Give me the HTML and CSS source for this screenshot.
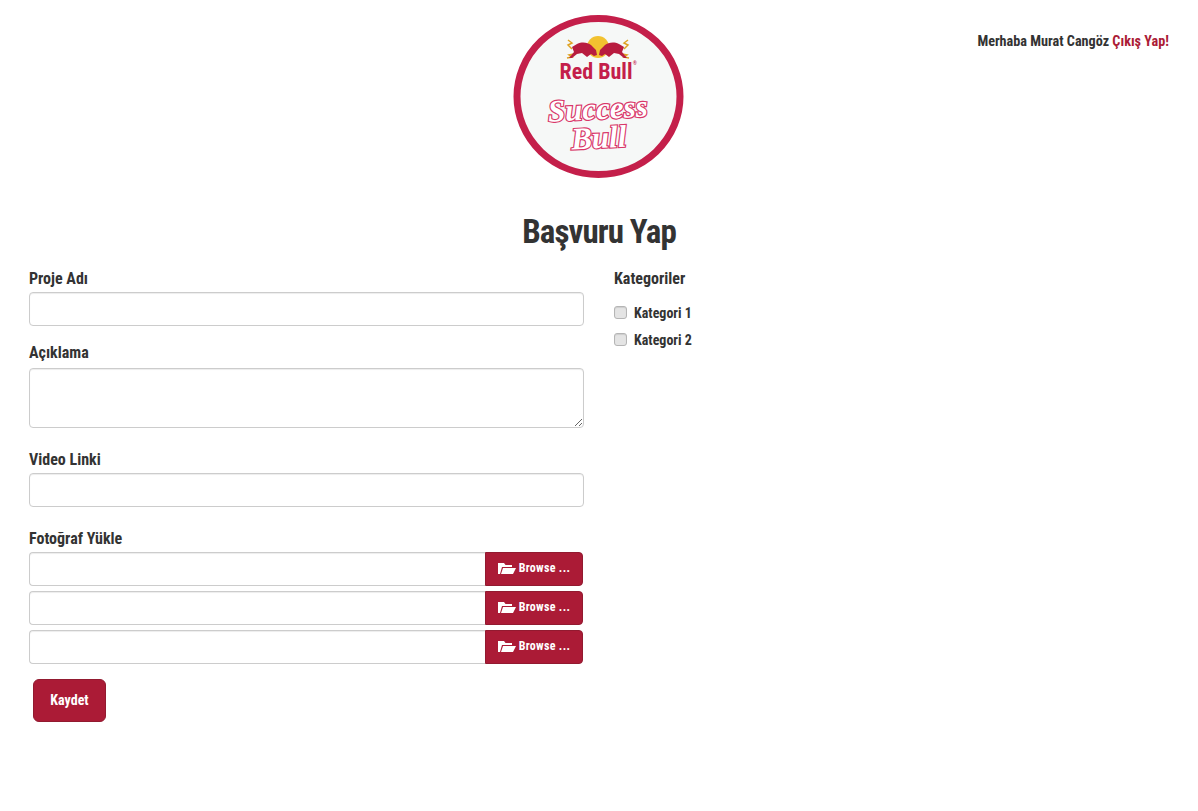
FILE: index.html
```html
<!DOCTYPE html>
<html lang="tr">
<head>
<meta charset="utf-8">
<title>Başvuru Yap</title>
<link rel="stylesheet" href="styles.css">
</head>
<body>
<div class="page">
  <header class="top">
    <div></div>
    <svg class="logo" viewBox="0 0 172 166" width="172" height="166" aria-label="Red Bull Success Bull">
      <ellipse cx="85.500" cy="82.500" rx="81.500" ry="78" fill="#f6f8f7" stroke="#c41f4a" stroke-width="7"/>
      <circle cx="85" cy="33" r="11" fill="#f2c230"/>
      <g>
        <path class="tail" d="M59 35 L55 31 L59 29 L55 26 M61 40 L56 41 L59 43 L54 44"/>
        <path class="bull" d="M56 44 L61 38 L59 33 L64 30 C70 27 75 29 78 31 L83 36 L84 41 L81 42 L78 40 L74 43 L69 39 L64 40 L59 44 Z"/>
      </g>
      <g transform="translate(170 0) scale(-1 1)">
        <path class="tail" d="M59 35 L55 31 L59 29 L55 26 M61 40 L56 41 L59 43 L54 44"/>
        <path class="bull" d="M56 44 L61 38 L59 33 L64 30 C70 27 75 29 78 31 L83 36 L84 41 L81 42 L78 40 L74 43 L69 39 L64 40 L59 44 Z"/>
      </g>
      <text class="rb" x="83" y="65" text-anchor="middle">Red Bull</text>
      <text class="rb-r" x="120" y="51">®</text>
      <g transform="rotate(-3 86 100)">
        <text class="script" x="85" y="105" text-anchor="middle">Success</text>
      </g>
      <g transform="rotate(-3 86 130)">
        <text class="script" x="86" y="134" text-anchor="middle">Bull</text>
      </g>
    </svg>
    <p class="greeting">Merhaba Murat Cangöz <a class="logout" href="#">Çıkış Yap!</a></p>
  </header>

  <h1 class="title">Başvuru Yap</h1>

  <form class="columns">
    <div class="col-main">
      <label class="label label-first" for="name">Proje Adı</label>
      <input class="field" id="name" type="text">

      <label class="label label-desc" for="desc">Açıklama</label>
      <textarea class="field area" id="desc"></textarea>

      <label class="label label-video" for="video">Video Linki</label>
      <input class="field" id="video" type="text">

      <label class="label label-photo">Fotoğraf Yükle</label>
      <div class="files">
        <div class="file">
          <input class="field file-input" type="text">
          <button class="browse" type="button"><svg class="folder" viewBox="0 0 18 13" width="18" height="13"><path d="M2 12 L0 12 L0 1 L6 1 L7.500 3 L14 3 L14 5 L4 5z M3 12 L5 6 L18 6 L15 12z"/></svg>Browse ...</button>
        </div>
        <div class="file">
          <input class="field file-input" type="text">
          <button class="browse" type="button"><svg class="folder" viewBox="0 0 18 13" width="18" height="13"><path d="M2 12 L0 12 L0 1 L6 1 L7.500 3 L14 3 L14 5 L4 5z M3 12 L5 6 L18 6 L15 12z"/></svg>Browse ...</button>
        </div>
        <div class="file">
          <input class="field file-input" type="text">
          <button class="browse" type="button"><svg class="folder" viewBox="0 0 18 13" width="18" height="13"><path d="M2 12 L0 12 L0 1 L6 1 L7.500 3 L14 3 L14 5 L4 5z M3 12 L5 6 L18 6 L15 12z"/></svg>Browse ...</button>
        </div>
      </div>
      <button class="save" type="button">Kaydet</button>
    </div>

    <div class="col-side">
      <div class="label label-first label-side">Kategoriler</div>
      <label class="check"><input class="box" type="checkbox"><span>Kategori 1</span></label>
      <label class="check"><input class="box" type="checkbox"><span>Kategori 2</span></label>
    </div>
  </form>
</div>
</body>
</html>
```
FILE: styles.css
```css
* { box-sizing: border-box; }
html, body { margin: 0; padding: 0; background: #fff; }
body {
  font-family: "Roboto Condensed", "Roboto", sans-serif;
  font-stretch: 75%;
  font-weight: 700;
  color: #333;
  font-size: 16px;
}
.page { width: 1170px; margin: 0 auto; height: 811px; overflow: hidden; }

.top {
  display: grid;
  grid-template-columns: 1fr 172px 1fr;
  padding-top: 14px;
  height: 180px;
  align-items: start;
}
.logo { display: block; }
.greeting {
  margin: 18px 15px 0 0;
  text-align: right;
  font-size: 14.200px;
  line-height: 18px;
  color: #333;
}
.logout { color: #ab1b36; text-decoration: none; }

.bull { fill: #b81c3f; }
.tail { fill: none; stroke: #dfa324; stroke-width: 1.500; }
.rb { font-family: "Roboto Condensed", "Roboto", sans-serif; font-stretch: 75%; font-weight: 700; font-size: 22px; fill: #c41f4a; }
.rb-r { font-family: "Liberation Sans", sans-serif; font-size: 5px; fill: #c41f4a; }
.script {
  font-family: "Liberation Serif", serif;
  font-style: italic;
  font-weight: 700;
  font-size: 31px;
  fill: #fff;
  stroke: #d9386a;
  stroke-width: 2.400;
  paint-order: stroke;
}

.title {
  margin: 29px 0 0;
  height: 59px;
  text-align: center;
  font-size: 33px;
  letter-spacing: -0.9px;
  line-height: 45px;
  font-weight: 700;
  color: #333;
}

.columns { display: flex; }
.col-main { width: 585px; padding: 0 15px; }
.col-side { width: 585px; padding: 0 15px; }

.label {
  display: block;
  font-size: 16px;
  line-height: 22px;
  height: 20px;
  color: #333;
}
.label-first { height: 24px; }
.label-side { height: 31px; }
.label-desc { margin-top: 16px; margin-bottom: 6px; }
.label-video { margin-top: 21px; margin-bottom: 4px; }
.label-photo { margin-top: 21px; margin-bottom: 4px; }

.field {
  display: block;
  width: 100%;
  height: 34px;
  border: 1px solid #ccc;
  border-radius: 4px;
  background: #fff;
  font: inherit;
  box-shadow: inset 0 1px 1px rgba(0,0,0,.075);
}
.area { height: 60px; resize: vertical; }

.files { display: flex; flex-direction: column; gap: 5px; }
.file { display: flex; width: 554px; }
.file-input { flex: 1; min-width: 0; border-radius: 4px 0 0 4px; border-right: 0; }
.browse {
  width: 98px;
  height: 34px;
  display: flex;
  align-items: center;
  justify-content: center;
  gap: 3px;
  border: 1px solid #921a30;
  border-radius: 0 4px 4px 0;
  background: #ab1b36;
  color: #fff;
  font: inherit;
  font-size: 12px;
  letter-spacing: 0.3px;
  padding: 0 0 2px;
}
.folder { fill: #fff; flex: none; }

.save {
  display: block;
  margin: 15px 0 0 4px;
  width: 73px;
  height: 43px;
  border: 1px solid #921a30;
  border-radius: 6px;
  background: #ab1b36;
  color: #fff;
  font: inherit;
  font-size: 14px;
  padding: 0 0 2px;
}

.check {
  display: flex;
  align-items: center;
  height: 27px;
  font-size: 14px;
  color: #333;
}
.box {
  appearance: none;
  width: 13px;
  height: 13px;
  margin: 0 7px 0 0;
  flex: none;
  background: #e4e4e4;
  border: 1px solid #b5b5b5;
  border-radius: 3px;
  box-shadow: inset 0 1px 1px rgba(0,0,0,.1);
}
```
